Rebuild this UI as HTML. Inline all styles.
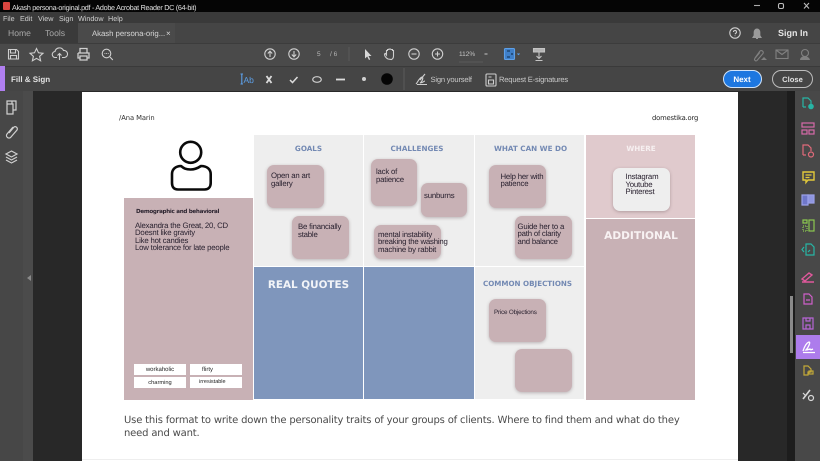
<!DOCTYPE html>
<html><head><meta charset="utf-8">
<style>
html,body{margin:0;padding:0;width:820px;height:461px;overflow:hidden;background:#282828;font-family:"Liberation Sans",sans-serif;text-rendering:geometricPrecision}
#w{position:absolute;left:0;top:0;width:820px;height:461px;overflow:hidden;filter:blur(.3px)}
.a{position:absolute}
.t{position:absolute;white-space:nowrap}
.card{position:absolute;background:#c8b1b5;border-radius:7px;box-shadow:0 1px 3px rgba(90,70,75,.35);color:#2a2230;font-size:7.8px;letter-spacing:-.2px;line-height:7.5px;white-space:nowrap}
.h{position:absolute;text-align:center;font-family:"DejaVu Sans",sans-serif;font-weight:bold;font-size:7.2px;color:#7389b3;white-space:nowrap}
.tag{position:absolute;background:#fff;color:#222;font-size:6px;height:11px;line-height:12px;width:52px}
svg{position:absolute;overflow:visible}
</style></head>
<body><div id="w">
<!-- chrome bands -->
<div class="a" style="left:0;top:0;width:820px;height:12px;background:#050505"></div>
<div class="a" style="left:0;top:12px;width:820px;height:11px;background:#3a3a3a"></div>
<div class="a" style="left:0;top:23px;width:820px;height:20px;background:#454545"></div>
<div class="a" style="left:0;top:23px;width:78px;height:20px;background:#3a3a3a"></div>
<div class="a" style="left:78px;top:23px;width:97px;height:20px;background:#4a4a4a"></div>
<div class="a" style="left:0;top:43px;width:820px;height:23px;background:#4a4a4a;border-top:1px solid #3c3c3c;box-sizing:border-box"></div>
<div class="a" style="left:0;top:66px;width:820px;height:25px;background:#454545;border-top:1px solid #3a3a3a;box-sizing:border-box"></div>
<div class="a" style="left:0;top:66px;width:5px;height:25px;background:#b07ff0"></div>
<div class="t" style="left:12px;top:2.500px;font-size:7.200px;letter-spacing:-.28px;color:#e0e0e0">Akash persona-original.pdf - Adobe Acrobat Reader DC (64-bit)</div>
<div class="a" style="left:3px;top:2px;width:7px;height:8px;background:#d8453f;border-radius:1px"></div>
<div class="t" style="left:3px;top:13.500px;font-size:7.200px;color:#d0d0d0">File</div>
<div class="t" style="left:20px;top:13.500px;font-size:7.200px;color:#d0d0d0">Edit</div>
<div class="t" style="left:38px;top:13.500px;font-size:7.200px;color:#d0d0d0">View</div>
<div class="t" style="left:59px;top:13.500px;font-size:7.200px;color:#d0d0d0">Sign</div>
<div class="t" style="left:78px;top:13.500px;font-size:7.200px;color:#d0d0d0">Window</div>
<div class="t" style="left:108px;top:13.500px;font-size:7.200px;color:#d0d0d0">Help</div>
<div class="t" style="left:8px;top:28px;font-size:8.600px;color:#a8a8a8">Home</div>
<div class="t" style="left:45px;top:28px;font-size:8.600px;color:#a8a8a8">Tools</div>
<div class="t" style="left:92px;top:28.500px;font-size:7.800px;letter-spacing:-.05px;color:#d5d5d5">Akash persona-orig...</div>
<div class="t" style="left:166px;top:28.500px;font-size:8px;color:#d5d5d5">×</div>
<div class="t" style="left:778px;top:28px;font-size:9px;font-weight:bold;color:#e4e4e4">Sign In</div>
<div class="t" style="left:11px;top:75px;font-size:8px;font-weight:bold;color:#e2e2e2">Fill &amp; Sign</div>

<svg width="820" height="92" style="left:0;top:0" fill="none" stroke="#cfcfcf" stroke-width="1.1">
 <!-- window controls -->
 <path d="M754 5.500h6" stroke="#aaa"/><rect x="778.500" y="3.500" width="5" height="5" rx="1.500" stroke="#bbb"/><path d="M804 3l5 5.500M809 3l-5 5.500" stroke="#bbb"/>
 <!-- toolbar left -->
 <path d="M8.500 49.500h8l2 2v7.500h-10zM10.500 49.500v3.500h5v-3.500M10.500 59v-3.500h6v3.500"/>
 <path d="M36.500 48.500l2 4.300 4.500.5-3.400 3 1 4.500-4.100-2.400-4.100 2.400 1-4.500-3.400-3 4.500-.5z"/>
 <path d="M57 57.500h-1.500a3 3 0 0 1-.5-6 4.500 4.500 0 0 1 8.500-1 3.500 3.500 0 0 1 1 7H62M59.500 60v-6M57.500 55.500l2-2 2 2"/>
 <path d="M80 53v-4.500h7V53M78 53h11v5h-2M80 58h-2v-5M80 56h7v4h-7z" stroke-width="1.300"/>
 <circle cx="106.500" cy="53.500" r="4.300"/><path d="M110 57l2.800 3"/><path d="M104.500 53.500h.8M106.200 53.500h.8M107.800 53.500h.8"/>
 <!-- page nav -->
 <circle cx="270" cy="54" r="5.200"/><path d="M270 57v-5.500M267.800 53.500l2.200-2.300 2.200 2.300"/>
 <circle cx="294" cy="54" r="5.200"/><path d="M294 51v5.500M291.800 54.500l2.200 2.300 2.200-2.300"/>
 <path d="M349 47v14" stroke="#5a5a5a"/>
 <path d="M365 49v9.500l2.200-2 1.800 3.500 1.200-.6-1.700-3.400h3z" fill="#d8d8d8" stroke="none"/>
 <path d="M388 59c-2-1-3.500-3-3.500-5l1-.5 1 1.500v-4.500h1v-1h1.500v-.5h1.500l.5.500h1.500v1h1v5.500c0 2-1 3-2 3.500z"/>
 <circle cx="414" cy="54" r="5.200"/><path d="M411.500 54h5"/>
 <circle cx="437.500" cy="54" r="5.200"/><path d="M435 54h5M437.500 51.500v5"/>
 <path d="M459 62h24" stroke="#5a5a5a"/><path d="M484.500 54h3" stroke="#bbb"/>
 <path d="M533.500 48.500h11v3.500h-11z" fill="#b5b5b5" stroke="#c4c4c4"/><path d="M539 52v6M536.500 56l2.500 2.500 2.500-2.500M535.500 60.500h7" stroke="#c4c4c4"/>
 <!-- right toolbar -->
 <path d="M755 58l5-7a2 2 0 0 1 3 2.500l-6 7a1.500 1.500 0 0 1-2.200-2l5-6" stroke="#808080"/><path d="M761 60l3-3 3 3z" fill="#808080" stroke="none"/>
 <rect x="776" y="50" width="12" height="8.500" stroke="#808080"/><path d="M776 50l6 4.500 6-4.500" stroke="#808080"/>
 <circle cx="805" cy="53" r="3.500" stroke="#808080"/><path d="M800 60c0-5 9-5 10 0z" fill="#808080" stroke="none"/>
 <!-- help, bell -->
 <circle cx="735" cy="33" r="5.200"/><path d="M733.500 32a1.500 1.500 0 1 1 2 1.400l-.5.800M735 35.500v.6"/>
 <path d="M753 37.500h8l-1.200-2v-3a2.800 3.500 0 0 0-5.600 0v3zM756 38.500h2" fill="#9a9a9a" stroke="#9a9a9a"/>
 <!-- fill & sign tools -->
 <path d="M240.500 74h2.500M241.800 74v10M240.500 84h2.500" stroke="#5da0e8"/>
 <path d="M266.500 76l5 7M271.500 76l-5 7" stroke-width="1.800" stroke="#dcdcdc"/>
 <path d="M290 80l2.500 2.500 5-5.500" stroke-width="1.500" stroke="#dcdcdc"/>
 <ellipse cx="317" cy="79.500" rx="4.300" ry="2.800" stroke-width="1.200"/>
 <path d="M336 79.500h9" stroke-width="1.800" stroke="#dcdcdc"/>
 <circle cx="364" cy="79" r="2" fill="#d0d0d0" stroke="none"/>
 <circle cx="387" cy="79" r="5.800" fill="#050505" stroke="none"/>
 <path d="M404 68v22" stroke="#5a5a5a"/>
 <path d="M416 84c2-2 3-6 6-7 2 0 0 5-2 6 3 0 4-2 5-2M417 84.500h10M425 74l-5 6" stroke="#cfcfcf"/>
 <rect x="486" y="74" width="10" height="12" rx="1"/><path d="M488.500 80h5v4h-5zM488.500 77h3"/>
 <!-- view icon -->
 <rect x="504.500" y="48.500" width="10" height="11" rx="1" fill="#3f7fc8" stroke="#5da0e8"/>
 <path d="M507 51h3M512 53v2M507 57h3" stroke="#0e2b4a"/>
 <path d="M517.500 53.500l1 1 1-1" stroke="#5da0e8"/>
</svg>
<div class="t" style="left:243.500px;top:74.500px;font-size:8.500px;color:#5da0e8">Ab</div>
<div class="t" style="left:317px;top:51px;font-size:6.500px;color:#b8b8b8">5</div>
<div class="t" style="left:330px;top:51px;font-size:6.500px;color:#b8b8b8">/ 6</div>
<div class="t" style="left:459px;top:51px;font-size:6.500px;color:#c4c4c4">112%</div>
<div class="t" style="left:430.500px;top:74.500px;font-size:7.600px;letter-spacing:-.2px;color:#c8c8c8">Sign yourself</div>
<div class="t" style="left:499px;top:74.500px;font-size:7.600px;letter-spacing:-.2px;color:#c8c8c8">Request E-signatures</div>
<div class="a" style="left:722.500px;top:70px;width:39px;height:18px;box-sizing:border-box;border:1px solid #cfe3fa;border-radius:10px;background:#1d77e0;color:#fff;font-size:8px;font-weight:bold;text-align:center;line-height:17px">Next</div>
<div class="a" style="left:772px;top:70px;width:41px;height:18px;box-sizing:border-box;border:1px solid #bdbdbd;border-radius:10px;color:#e0e0e0;font-size:7.600px;font-weight:bold;text-align:center;line-height:17px">Close</div>

<!-- side panels -->
<div class="a" style="left:0;top:91px;width:23px;height:370px;background:#474747"></div>
<div class="a" style="left:23px;top:91px;width:10px;height:370px;background:#4b4b4b"></div>
<div class="a" style="left:787px;top:91px;width:8px;height:370px;background:#1d1d1d"></div>
<div class="a" style="left:795px;top:91px;width:25px;height:370px;background:#484848"></div>
<div class="a" style="left:789.500px;top:296px;width:3px;height:57px;background:#8a8a8a"></div>
<div class="a" style="left:796px;top:335px;width:24px;height:24px;background:#ad7cec"></div>
<svg width="820" height="461" style="left:0;top:0" fill="none" stroke-width="1.200">
 <!-- left icons -->
 <g stroke="#d0d0d0"><path d="M7 104v-3h5l4 0v9h-3M7 104h6v10H7zM12 101v3"/>
 <path d="M9 133l5-6a2.200 2.200 0 0 1 3 3l-6 7a2.500 2.500 0 0 1-4-3l6-7"/>
 <path d="M11.500 151l5.500 3-5.500 3-5.500-3zM6 157l5.500 3 5.500-3M6 160l5.500 3 5.500-3"/></g>
 <path d="M31 275l-4 3 4 3z" fill="#8a8a8a"/>
 <!-- right icons -->
 <g stroke="#27b5a5"><path d="M803 107v-9h5l3 3v3M803 107h3"/></g><circle cx="811" cy="106.500" r="2.800" fill="#27b5a5"/>
 <g stroke="#d66aa8"><rect x="802" y="123" width="12" height="4"/><rect x="802" y="130" width="5" height="4"/><rect x="809" y="130" width="5" height="4"/></g>
 <g stroke="#e06a7a"><path d="M803 155v-10h5l3 3v3M803 155h3"/><circle cx="811" cy="154.500" r="2.500"/></g>
 <path d="M803 172h11v8h-6l-2 2.500V180h-3z" stroke="#e2c93a" stroke-width="1.400"/><path d="M805.500 175h6M805.500 177.500h4" stroke="#e2c93a"/>
 <path d="M802 195h6v10h-6z" fill="#6f77c9" stroke="#9aa0e8"/><path d="M808 195h6v8h-6z" fill="#8f96e0" stroke="#9aa0e8"/>
 <g stroke="#8cc84f"><rect x="809" y="220" width="5" height="11"/><rect x="803" y="226" width="4" height="5" stroke-dasharray="1 1"/><path d="M803 220h4v3h-4z"/></g>
 <path d="M806 244h5l3 3v8h-8zM804 247l-2 2.500 2 2.500M810 250l-2 2" stroke="#27b5a5"/>
 <path d="M802 279l7-6 3 2-7 6zM802 282h12" stroke="#e0589c" stroke-width="1.400"/>
 <g stroke="#cf5fc9"><path d="M804 294h5l3 3v7h-8zM806 300h4"/></g>
 <g stroke="#b765d6"><path d="M803 318h10v11h-10zM806 318v3h4v-3M806 329v-4h4v4"/></g>
 <path d="M803 351c1-3 3-8 6-9 2 0-1 6-3 8 2 0 3-1 4-1 0 1 1 1 3 0M803 352.500h12" stroke="#fff" stroke-width="1.300"/>
 <path d="M804 366h4l3 3v3h-3v3h-4z" stroke="#c2a838"/><rect x="809" y="371" width="4" height="3" stroke="#c2a838"/>
 <path d="M803 399l7-9" stroke="#d8d8d8" stroke-width="1.600"/><circle cx="811" cy="398" r="2.500" stroke="#d8d8d8"/><path d="M803 393l3 3" stroke="#d8d8d8"/>
</svg>

<!-- page -->
<div class="a" style="left:82px;top:92px;width:656px;height:369px;background:#fff"></div>
<div class="t" style="left:119px;top:113.500px;font-size:6.800px;color:#333;font-family:'DejaVu Sans',sans-serif;letter-spacing:-.1px">/Ana Marin</div>
<div class="t" style="left:652px;top:113.500px;font-size:6.800px;color:#222;font-family:'DejaVu Sans',sans-serif;letter-spacing:-.2px">domestika.org</div>

<!-- grid -->
<div class="a" style="left:254px;top:135px;width:109px;height:131px;background:#eeeeee"></div>
<div class="a" style="left:364px;top:135px;width:109.500px;height:131px;background:#eeeeee"></div>
<div class="a" style="left:474.700px;top:135px;width:109.600px;height:131px;background:#eeeeee"></div>
<div class="a" style="left:585.700px;top:135px;width:109.300px;height:83px;background:#e0cacd"></div>
<div class="a" style="left:585.700px;top:219px;width:109.300px;height:180.500px;background:#c8b1b5"></div>
<div class="a" style="left:124px;top:198px;width:129px;height:202.300px;background:#c8b1b5"></div>
<div class="a" style="left:254px;top:267px;width:109px;height:132.300px;background:#7f96bc"></div>
<div class="a" style="left:364px;top:267px;width:109.500px;height:132.300px;background:#7f96bc"></div>
<div class="a" style="left:474.700px;top:267px;width:109.600px;height:132.300px;background:#eeeeee"></div>

<svg width="46" height="54" style="left:169px;top:140px" fill="none" stroke="#0a0a0a" stroke-width="2.600" stroke-linejoin="round">
 <circle cx="21.700" cy="12.300" r="10.500"/>
 <path d="M12 26C7 26 3 29 3 34v9c0 4 2 6.500 6 6.500h26.500c4 0 6.200-2.500 6.200-6.500v-9c0-5-4-8-9.700-8-3 2-6 3.500-10.500 3.500S15 28.500 12 26z"/>
</svg>

<div class="t" style="left:136px;top:208.500px;font-size:5.600px;font-weight:bold;color:#2c2430;font-family:'DejaVu Sans',sans-serif;letter-spacing:-.3px">Demographic and behavioral</div>
<div class="t" style="left:135px;top:222px;font-size:7.800px;letter-spacing:-.2px;line-height:7.300px;color:#2a2230">Alexandra the Great, 20, CD<br>Doesnt like gravity<br>Like hot candies<br>Low tolerance for late people</div>

<div class="tag" style="left:134px;top:364px;text-align:center">workaholic</div>
<div class="tag" style="left:190px;top:364px;text-indent:12px">flirty</div>
<div class="tag" style="left:134px;top:377px;text-align:center;font-size:5.700px">charming</div>
<div class="tag" style="left:190px;top:377px;text-indent:9px;font-size:5.500px;line-height:11px">irresistable</div>

<div class="h" style="left:254px;top:143.500px;width:109px">GOALS</div>
<div class="h" style="left:364px;top:143.500px;width:106px">CHALLENGES</div>
<div class="h" style="left:475px;top:143.500px;width:111px">WHAT CAN WE DO</div>
<div class="h" style="left:586px;top:143.500px;width:110px;color:#f7f0f1">WHERE</div>
<div class="h" style="left:475px;top:279px;width:105px;font-size:7.150px">COMMON OBJECTIONS</div>
<div class="h" style="left:254px;top:279px;width:109px;font-size:10.400px;color:#f2f4f8">REAL QUOTES</div>
<div class="h" style="left:586px;top:230px;width:110px;font-size:10.600px;color:#f8f2f3">ADDITIONAL</div>

<div class="card" style="left:267px;top:165px;width:57px;height:43px"><span class="t" style="left:4px;top:7px">Open an art<br>gallery</span></div>
<div class="card" style="left:292px;top:216px;width:57px;height:43px"><span class="t" style="left:6px;top:7px">Be financially<br>stable</span></div>
<div class="card" style="left:371px;top:159px;width:45.500px;height:47px"><span class="t" style="left:5px;top:9px">lack of<br>patience</span></div>
<div class="card" style="left:421px;top:183px;width:45.500px;height:34px"><span class="t" style="left:3px;top:9px">sunburns</span></div>
<div class="card" style="left:374px;top:225px;width:67px;height:34px"><span class="t" style="left:4px;top:5.500px">mental instability<br>breaking the washing<br>machine by rabbit</span></div>
<div class="card" style="left:489px;top:165px;width:57px;height:43px"><span class="t" style="left:11.500px;top:7.500px">Help her with<br>patience</span></div>
<div class="card" style="left:515px;top:216px;width:57px;height:43px"><span class="t" style="left:2.500px;top:6.500px">Guide her to a<br>path of clarity<br>and balance</span></div>
<div class="card" style="left:613px;top:168px;width:57px;height:43px;background:#eeeeee"><span class="t" style="left:12.500px;top:5px">Instagram<br>Youtube<br>Pinterest</span></div>
<div class="card" style="left:489px;top:299px;width:57px;height:43px"><span class="t" style="left:5px;top:10px;font-size:6.300px">Price Objections</span></div>
<div class="card" style="left:515px;top:349px;width:57px;height:43px"></div>

<div class="t" style="left:124px;top:413.500px;font-size:10px;line-height:13px;color:#4a4a4a;font-family:'DejaVu Sans',sans-serif;letter-spacing:-.17px">Use this format to write down the personality traits of your groups of clients. Where to find them and what do they<br>need and want.</div>
<div class="a" style="left:82px;top:459px;width:656px;height:1px;background:#eee"></div>
</div></body></html>
